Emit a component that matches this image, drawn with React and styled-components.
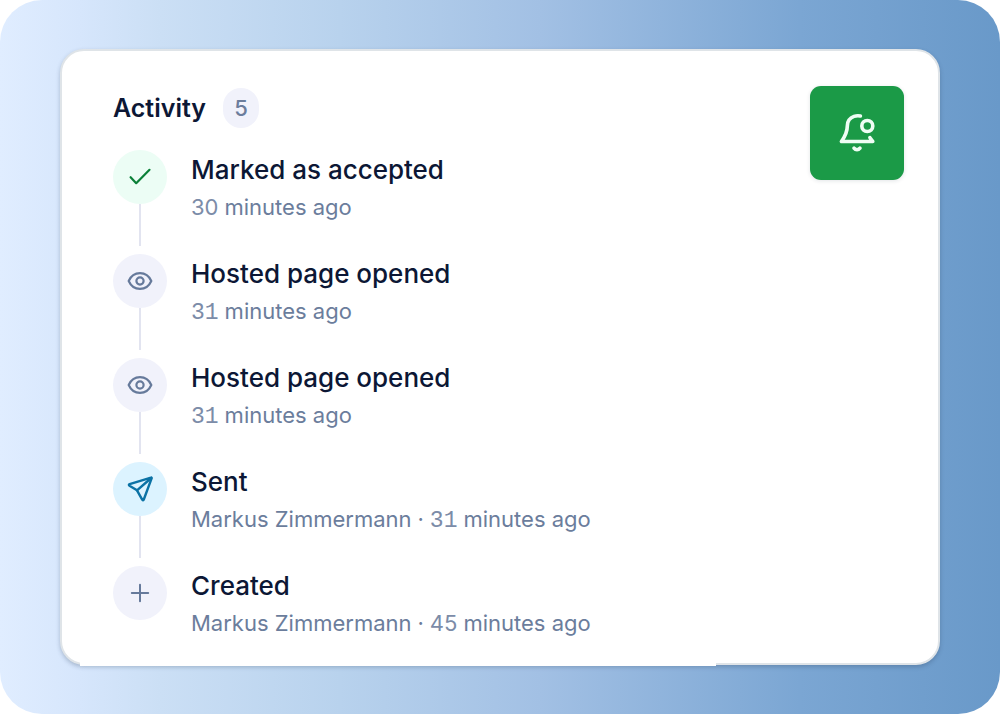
import React from "react";
import styled, { createGlobalStyle } from "styled-components";

const GlobalStyle = createGlobalStyle`
  *, *::before, *::after { box-sizing: border-box; }
  body {
    margin: 0;
    background: #ffffff;
    font-family: Inter, "Liberation Sans", sans-serif;
    -webkit-font-smoothing: antialiased;
  }
`;

const Backdrop = styled.main`
  min-height: 100vh;
  padding: 49px 60px 48px;
  border-radius: 42px;
  background: linear-gradient(90deg, #e0edff 0%, #d6e6fc 8%, #cbdff5 16%, #b8d2ed 34%, #a2c0e4 54%, #7ba6d3 80%, #6999c9 100%);
`;

const Card = styled.section`
  position: relative;
  display: flex;
  align-items: flex-start;
  justify-content: space-between;
  padding: 35px 34px 43px 51px;
  border: 2px solid #dfe4e8;
  border-radius: 24px;
  background: #ffffff;
  box-shadow: 0 2px 4px rgba(40, 60, 90, 0.28);

  &::after {
    content: "";
    position: absolute;
    left: 18px;
    right: 222px;
    bottom: -3px;
    height: 4px;
    background: #ffffff;
  }
`;

const Header = styled.header`
  display: flex;
  align-items: center;
  gap: 17px;
  height: 44px;
  margin-bottom: 20px;
`;

const Heading = styled.h2`
  margin: 0;
  font-size: 25px;
  line-height: 40px;
  font-weight: 600;
  color: #0c1735;
`;

const Count = styled.span`
  width: 36px;
  border-radius: 20px;
  background: #f1f2fb;
  color: #6b7d9c;
  font-size: 22px;
  line-height: 40px;
  font-weight: 500;
  text-align: center;
`;

const Timeline = styled.ol`
  margin: 0;
  padding: 0;
  list-style: none;
`;

const Entry = styled.li`
  display: flex;
  gap: 24px;
  height: 104px;

  &:last-child { height: 54px; }
`;

const Rail = styled.div`
  display: flex;
  flex-direction: column;
  align-items: center;
`;

const Marker = styled.span`
  display: grid;
  place-items: center;
  flex: none;
  width: 54px;
  height: 54px;
  border-radius: 50%;
  background: ${(p) => p.$fill};
  color: ${(p) => p.$ink};
`;

const Connector = styled.span`
  width: 2px;
  height: 42px;
  background: #e2e4f0;
`;

const Title = styled.h3`
  margin: 0;
  font-size: 26px;
  line-height: 40px;
  font-weight: 500;
  color: #0c1735;
  white-space: nowrap;
`;

const Meta = styled.p`
  display: flex;
  align-items: baseline;
  gap: 6px;
  margin: 0;
  font-size: 22px;
  line-height: 34px;
  color: #6b7d9c;
  white-space: nowrap;
`;

const Amount = styled.span`
  color: #7c8ca8;
  font-family: ${(p) => (p.$mono ? '"Liberation Mono", monospace' : "inherit")};
  font-size: ${(p) => (p.$mono ? 23 : 22)}px;
`;

const AlertButton = styled.button`
  display: grid;
  place-items: center;
  flex: none;
  width: 94px;
  height: 94px;
  padding: 0;
  border: 0;
  border-radius: 11px;
  background: #1b9a47;
  color: #effdf4;
  box-shadow: 0 1px 4px rgba(20, 40, 60, 0.12);
  cursor: pointer;
`;

const Icon = styled.svg.attrs({
  fill: "none",
  stroke: "currentColor",
  strokeLinecap: "round",
  strokeLinejoin: "round",
  "aria-hidden": true,
})`
  display: block;
  width: ${(p) => p.$size}px;
  height: ${(p) => p.$size}px;
`;

const CheckIcon = () => (
  <Icon $size={28} viewBox="0 0 28 28" strokeWidth="2.2">
    <path d="M4.6 14.2 10.2 20.2 23.5 6.8" />
  </Icon>
);

const EyeIcon = () => (
  <Icon $size={28} viewBox="0 0 28 28" strokeWidth="2.2">
    <path d="M2.7 14C4.9 9 9 6.1 14 6.1S23.1 9 25.3 14C23.1 19 19 21.9 14 21.9S4.9 19 2.7 14Z" />
    <circle cx="14" cy="14" r="3.6" />
  </Icon>
);

const SendIcon = () => (
  <Icon $size={28} viewBox="0 0 28 28" strokeWidth="2.4">
    <path d="M25 2.6 3.6 9.2Q2.2 9.8 3.5 10.7L11 15.3 16.2 24.6Q17.2 26 17.8 24.5L25.6 3.4Q25.8 2.3 25 2.6Z" />
    <path d="M25.2 3 11 15.3" />
  </Icon>
);

const PlusIcon = () => (
  <Icon $size={28} viewBox="0 0 28 28" strokeWidth="2">
    <path d="M5.8 14H22.2M14 5.8V22.2" />
  </Icon>
);

const BellIcon = () => (
  <Icon $size={40} viewBox="0 0 40 40" strokeWidth="3.6">
    <path d="M23.4 3C21.4 2.5 19.2 2.6 17 3.4 12.8 5 10.5 8.2 10.4 12.4 10.3 17.5 9.6 21.6 4.4 28.5H35.8C34.8 27.1 33.6 25.8 32.9 24.6" />
    <circle cx="30.3" cy="13" r="5.5" />
    <path d="M17 35.2C18.6 37.2 21.4 37.2 23 35.2" />
  </Icon>
);

const neutral = { fill: "#f1f2fb", ink: "#667a9b" };

const entries = [
  { title: "Marked as accepted", amount: "30", icon: CheckIcon, fill: "#ecfdf5", ink: "#0b8038" },
  { title: "Hosted page opened", amount: "31", mono: true, icon: EyeIcon, ...neutral },
  { title: "Hosted page opened", amount: "31", mono: true, icon: EyeIcon, ...neutral },
  { title: "Sent", by: "Markus Zimmermann", amount: "31", mono: true, icon: SendIcon, fill: "#dcf3ff", ink: "#0b72a5" },
  { title: "Created", by: "Markus Zimmermann", amount: "45", icon: PlusIcon, ...neutral },
];

export default function App() {
  return (
    <>
      <GlobalStyle />
      <Backdrop>
        <Card>
          <div>
            <Header>
              <Heading>Activity</Heading>
              <Count>{entries.length}</Count>
            </Header>
            <Timeline>
              {entries.map(({ title, by, amount, mono, icon: Glyph, fill, ink }, i) => (
                <Entry key={i}>
                  <Rail>
                    <Marker $fill={fill} $ink={ink}>
                      <Glyph />
                    </Marker>
                    {i < entries.length - 1 && <Connector />}
                  </Rail>
                  <div>
                    <Title>{title}</Title>
                    <Meta>
                      {by && <span>{by}</span>}
                      {by && <span>·</span>}
                      <Amount $mono={mono}>{amount}</Amount>
                      <span>minutes ago</span>
                    </Meta>
                  </div>
                </Entry>
              ))}
            </Timeline>
          </div>
          <AlertButton type="button" aria-label="Notifications">
            <BellIcon />
          </AlertButton>
        </Card>
      </Backdrop>
    </>
  );
}
